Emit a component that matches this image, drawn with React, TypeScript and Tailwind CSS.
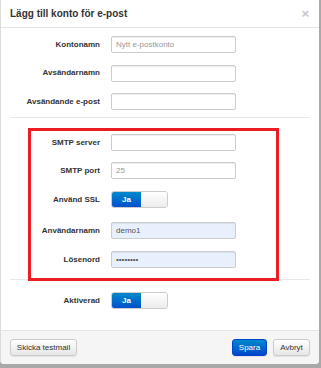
import type { ReactNode } from 'react'

// ─── Shared classes ──────────────────────────────────────────────────────────

const FONT = "font-['Liberation_Sans',Arial,sans-serif]"

const INPUT =
  'h-[17px] w-[125px] rounded-[2px] border border-[#cccccc] px-[4px] text-[8px] text-[#555] shadow-[inset_0_1px_1px_rgba(0,0,0,0.075)] outline-none placeholder:text-[#999]'

// ─── Form row ────────────────────────────────────────────────────────────────

interface RowProps {
  label: string
  labelWidth: number
  children: ReactNode
  className?: string
}

function Row({ label, labelWidth, children, className }: RowProps) {
  return (
    <div className={`flex items-center ${className ?? ''}`}>
      <label
        className="shrink-0 text-right text-[8px] font-bold text-[#333]"
        style={{ width: labelWidth }}
      >
        {label}
      </label>
      <div className="ml-[11px] flex">{children}</div>
    </div>
  )
}

// ─── Toggle (bootstrap-switch look) ──────────────────────────────────────────

function Toggle() {
  return (
    <div className="flex h-[17px] w-[57px] overflow-hidden rounded-[3px] border border-[#cccccc]">
      <div className="flex w-[29px] items-center justify-center bg-gradient-to-b from-[#0088cc] to-[#0050cc] text-[8px] font-bold text-white">
        Ja
      </div>
      <div className="flex-1 bg-gradient-to-b from-[#ffffff] to-[#ececec]" />
    </div>
  )
}

// ─── Buttons ─────────────────────────────────────────────────────────────────

function Button({ children, primary, className }: { children: ReactNode; primary?: boolean; className?: string }) {
  const look = primary
    ? 'border-[#0044cc] bg-gradient-to-b from-[#0088cc] to-[#0044cc] text-white'
    : 'border-[#cccccc] bg-gradient-to-b from-[#ffffff] to-[#e6e6e6] text-[#333]'
  return (
    <button
      className={`flex h-[17px] items-center justify-center rounded-[3px] border text-[8px] shadow-[0_1px_1px_rgba(0,0,0,0.08)] ${look} ${className ?? ''}`}
    >
      {children}
    </button>
  )
}

// ─── App ─────────────────────────────────────────────────────────────────────

export default function App() {
  return (
    <div className={`h-[368px] w-[321px] bg-[#a9a9a9] ${FONT}`}>
      <div className="flex h-[364px] w-[319px] flex-col overflow-hidden rounded-b-[4px] border-l border-[#dcdcdc] bg-white">
        {/* ── Header ─────────────────────────────────────────────── */}
        <div className="flex h-[28px] shrink-0 items-center justify-between border-b border-[#e5e5e5] pl-[9px] pr-[10px]">
          <h3 className="text-[10px] font-bold text-[#333]">Lägg till konto för e-post</h3>
          <span className="text-[13px] font-bold leading-none text-[#c8c8c8]">×</span>
        </div>

        {/* ── Body ───────────────────────────────────────────────── */}
        <div className="flex flex-1 flex-col pt-[8px]">
          <div className="flex flex-col gap-[11.5px]">
            <Row label="Kontonamn" labelWidth={99}>
              <input className={`${INPUT} bg-white`} placeholder="Nytt e-postkonto" readOnly />
            </Row>
            <Row label="Avsändarnamn" labelWidth={99}>
              <input className={`${INPUT} bg-white`} readOnly />
            </Row>
            <Row label="Avsändande e-post" labelWidth={99}>
              <input className={`${INPUT} bg-white`} readOnly />
            </Row>
          </div>

          <div className="mx-[9px] mt-[7px] h-px bg-[#e8e8e8]" />

          {/* SMTP settings, highlighted */}
          <div className="relative z-10 mx-[27px] mt-[10px] w-[251px] border-[3px] border-[#ec1c24] pb-[10px] pt-[3px]">
            <Row label="SMTP server" labelWidth={69}>
              <input className={`${INPUT} bg-white`} readOnly />
            </Row>
            <Row label="SMTP port" labelWidth={69} className="mt-[11px]">
              <input className={`${INPUT} bg-white`} placeholder="25" readOnly />
            </Row>
            <Row label="Använd SSL" labelWidth={69} className="mt-[12px]">
              <Toggle />
            </Row>
            <Row label="Användarnamn" labelWidth={69} className="mt-[14px]">
              <input className={`${INPUT} bg-[#e8f0fe] text-[#222]`} defaultValue="demo1" readOnly />
            </Row>
            <Row label="Lösenord" labelWidth={69} className="mt-[12px]">
              <input type="password" className={`${INPUT} bg-[#e8f0fe] text-[#222]`} defaultValue="demo1234" readOnly />
            </Row>
          </div>

          <div className="mx-[9px] -mt-[2px] h-px bg-[#e8e8e8]" />

          <Row label="Aktiverad" labelWidth={99} className="mt-[12px]">
            <Toggle />
          </Row>
        </div>

        {/* ── Footer ─────────────────────────────────────────────── */}
        <div className="flex h-[34px] shrink-0 items-center justify-between border-t border-[#e5e5e5] bg-[#f5f5f5] px-[9px]">
          <Button className="w-[67px]">Skicka testmail</Button>
          <div className="flex gap-[6px]">
            <Button primary className="w-[35px]">Spara</Button>
            <Button className="w-[37px]">Avbryt</Button>
          </div>
        </div>
      </div>
    </div>
  )
}
